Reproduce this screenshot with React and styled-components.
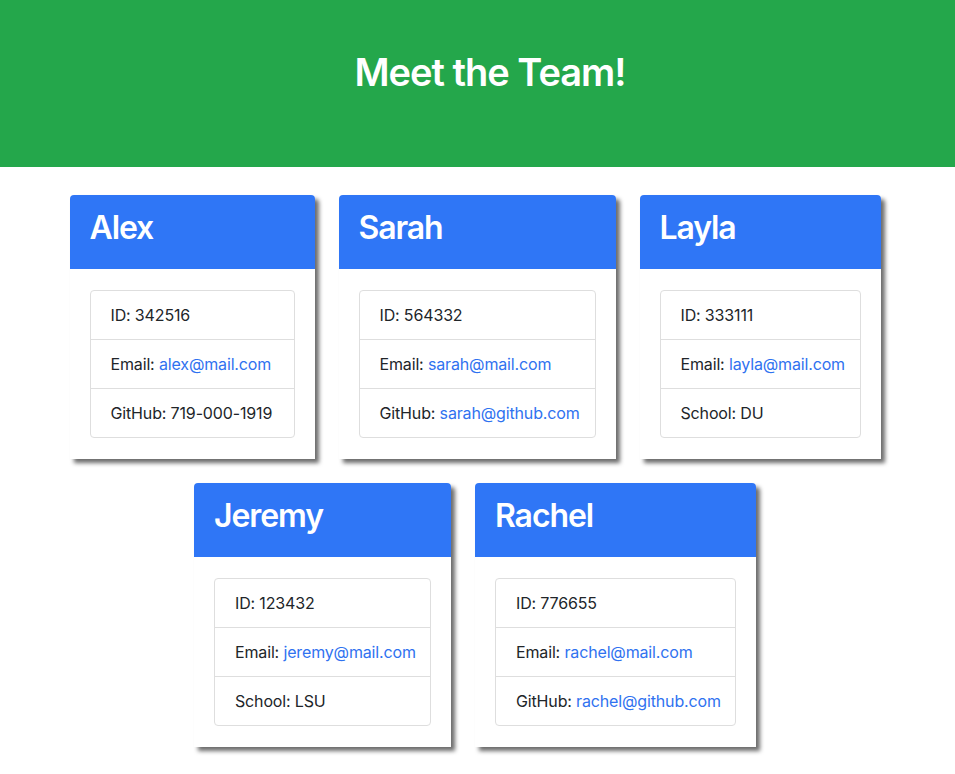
import React from 'react'
import styled, { createGlobalStyle } from 'styled-components'

const GlobalStyle = createGlobalStyle`
  body {
    margin: 0;
    background: #fff;
    font-family: Inter, "Liberation Sans", sans-serif;
    color: #212529;
  }
`

const Banner = styled.header`
  background: #24a74b;
  height: 167px;
  display: flex;
  justify-content: center;
  align-items: flex-start;
  padding-left: 25px;
  box-sizing: border-box;
`

const BannerTitle = styled.h1`
  margin: 49px 0 0;
  font-size: 38px;
  line-height: 46px;
  font-weight: 600;
  color: #fff;
  letter-spacing: -1px;
`

const Team = styled.main`
  display: flex;
  flex-wrap: wrap;
  justify-content: center;
  gap: 24px;
  padding: 28px 5px 24px 0;
`

const Card = styled.section`
  width: ${(p) => p.$width}px;
  background: #fff;
  border-radius: 4px 4px 0 0;
  box-shadow: 4px 4px 4px rgba(0, 0, 0, 0.58);
  overflow: hidden;
`

const CardHeader = styled.div`
  background: #2f76f6;
  padding: 14px 20px 22px;
`

const Name = styled.h2`
  margin: 0;
  font-size: 32px;
  line-height: 38px;
  font-weight: 600;
  color: #fff;
  letter-spacing: -1.1px;
`

const CardBody = styled.div`
  padding: 21px 20px 21px;
`

const List = styled.ul`
  list-style: none;
  margin: 0;
  padding: 0;
  border: 1px solid #dedede;
  border-radius: 4px;
`

const Item = styled.li`
  padding: 12px 20px;
  font-size: 16px;
  line-height: 24px;
  letter-spacing: -0.15px;
  white-space: nowrap;
  & + & {
    border-top: 1px solid #dedede;
  }
`

const Link = styled.a`
  color: #2f72f0;
  text-decoration: none;
`

const team = [
  { name: 'Alex', id: '342516', email: 'alex@mail.com', extra: ['GitHub', '719-000-1919'], width: 245 },
  { name: 'Sarah', id: '564332', email: 'sarah@mail.com', extra: ['GitHub', 'sarah@github.com', true], width: 277 },
  { name: 'Layla', id: '333111', email: 'layla@mail.com', extra: ['School', 'DU'], width: 241 },
  { name: 'Jeremy', id: '123432', email: 'jeremy@mail.com', extra: ['School', 'LSU'], width: 257 },
  { name: 'Rachel', id: '776655', email: 'rachel@mail.com', extra: ['GitHub', 'rachel@github.com', true], width: 281 },
]

export default function App() {
  return (
    <>
      <GlobalStyle />
      <Banner>
        <BannerTitle>Meet the Team!</BannerTitle>
      </Banner>
      <Team>
        {team.map((m) => (
          <Card key={m.name} $width={m.width}>
            <CardHeader>
              <Name>{m.name}</Name>
            </CardHeader>
            <CardBody>
              <List>
                <Item>ID: {m.id}</Item>
                <Item>
                  Email: <Link href={`mailto:${m.email}`}>{m.email}</Link>
                </Item>
                <Item>
                  {m.extra[0]}: {m.extra[2] ? <Link href="#">{m.extra[1]}</Link> : m.extra[1]}
                </Item>
              </List>
            </CardBody>
          </Card>
        ))}
      </Team>
    </>
  )
}
